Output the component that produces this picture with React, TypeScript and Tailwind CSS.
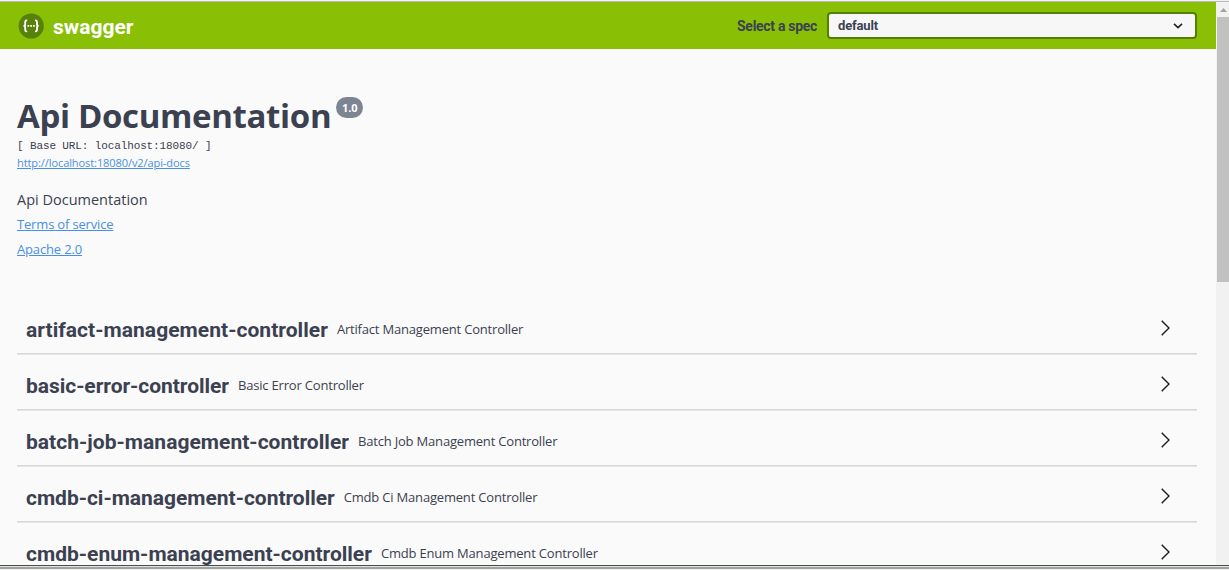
const rows = [
  { tag: 'artifact-management-controller', text: 'Artifact Management Controller', tracking: 'tracking-[0.04px]' },
  { tag: 'basic-error-controller', text: 'Basic Error Controller', tracking: 'tracking-[-0.04px]' },
  { tag: 'batch-job-management-controller', text: 'Batch Job Management Controller', tracking: 'tracking-[0.03px]' },
  { tag: 'cmdb-ci-management-controller', text: 'Cmdb Ci Management Controller', tracking: 'tracking-[-0.02px]' },
  { tag: 'cmdb-enum-management-controller', text: 'Cmdb Enum Management Controller', tracking: 'tracking-[0px]' },
];

function Logo() {
  return (
    <svg width="26" height="26" viewBox="0 0 26 26" fill="none">
      <circle cx="13.2" cy="13" r="12.6" fill="#578108" />
      <path
        d="M9.2 7.4H8.6Q7.2 7.4 7.2 8.9V11.2Q7.2 12.9 5.5 12.9Q7.2 12.9 7.2 14.6V16.9Q7.2 18.4 8.6 18.4H9.2M17 7.4H17.6Q19 7.4 19 8.9V11.2Q19 12.9 20.7 12.9Q19 12.9 19 14.6V16.9Q19 18.4 17.6 18.4H17"
        stroke="#fff"
        strokeWidth="1.8"
      />
      <path d="M9.4 12.1h1.8v1.6H9.4zM12.2 12.1h1.8v1.6h-1.8zM15 12.1h1.8v1.6H15z" fill="#fff" />
    </svg>
  );
}

export default function App() {
  return (
    <div className="flex h-[570px] w-[1229px] flex-col overflow-hidden bg-[#fafafa] font-['Open_Sans',sans-serif] text-[#3b4151]">
      <div className="h-0.5 shrink-0 border-b border-[#b9b9b9] bg-[#f2f2f2]" />
      <div className="flex h-[563px] shrink-0">
        <main className="h-full w-[1216px] overflow-hidden">
          <header className="flex h-[47px] items-center justify-between bg-[#89bf04] pr-[19px] pl-[18px] font-['Roboto',sans-serif] font-bold">
            <div className="flex items-center gap-[9px] pt-px text-white">
              <Logo />
              <span className="pt-px text-[21px] leading-6">swagger</span>
            </div>
            <div className="flex items-center gap-2.5">
              <span className="text-sm tracking-[-0.3px]">Select a spec</span>
              <div className="flex h-[27px] w-[370px] items-center justify-between rounded-sm border-2 border-[#547f00] bg-[#f7f7f7] pr-3 pl-[9px] text-[13px] tracking-[-0.15px]">
                <span>default</span>
                <svg width="10" height="6" viewBox="0 0 10 6" fill="none" stroke="#222" strokeWidth="1.6">
                  <path d="M1 .8 5 4.6 9 .8" />
                </svg>
              </div>
            </div>
          </header>
          <section className="h-[249px] px-[17px] pt-[44px]">
            <h1 className="flex h-[45px] items-start text-[33px] leading-[46px] font-bold">
              <span className="tracking-[-0.35px]">Api Documentation</span>
              <span className="mt-1 ml-[5px] flex h-[21px] w-[27px] items-center justify-center rounded-full bg-[#7d8492] text-[11px] text-white">1.0</span>
            </h1>
            <div className="h-4 font-['Liberation_Mono',monospace] text-[11px] leading-4 tracking-[-0.12px] whitespace-pre">[ Base URL: localhost:18080/ ]</div>
            <div className="h-[18px] text-[11px] leading-[18px] tracking-[-0.08px] text-[#4990e2] underline">http://localhost:18080/v2/api-docs</div>
            <p className="mt-[17px] h-[22px] text-[14.5px] leading-[22px]">Api Documentation</p>
            <p className="mt-[3px] h-5 text-[13px] leading-5 tracking-[-0.17px] text-[#4990e2] underline">Terms of service</p>
            <p className="mt-[5px] h-5 text-[13px] leading-5 tracking-[-0.15px] text-[#4990e2] underline">Apache 2.0</p>
          </section>
          <section className="pt-px pr-[19px] pl-[17px]">
            {rows.map((r) => (
              <div key={r.tag} className="border-b border-[#e6e6e8]">
                <div className="flex h-[55px] items-center border-b border-[#d6d7db] pt-[6px] pr-[27px] pl-[9px]">
                  <span className={`pt-px font-['Roboto',sans-serif] text-[21px] leading-7 font-bold ${r.tracking}`}>{r.tag}</span>
                  <span className="ml-[9px] grow text-[13px] leading-5 tracking-[-0.19px]">{r.text}</span>
                  <svg className="mb-0.5" width="9" height="16" viewBox="0 0 9 16" fill="none" stroke="#222" strokeWidth="1.5">
                    <path d="M.7.7 8 8 .7 15.3" />
                  </svg>
                </div>
              </div>
            ))}
          </section>
        </main>
        <aside className="flex w-[13px] flex-col items-end bg-[#f1f1f1]">
          <div className="flex h-[15px] w-full items-center justify-center pt-px pl-px">
            <svg width="7" height="4" viewBox="0 0 7 4"><path d="M0 4 3.5 0 7 4" fill="#a3a3a3" /></svg>
          </div>
          <div className="h-[265px] w-3 bg-[#c1c1c1]" />
        </aside>
      </div>
      <div className="h-px shrink-0 bg-[#484d48]" />
      <div className="h-px shrink-0 bg-[#e2e3e2]" />
      <div className="h-0.5 shrink-0 bg-[#a0a3a0]" />
      <div className="h-px shrink-0 bg-[#eeeeee]" />
    </div>
  );
}
